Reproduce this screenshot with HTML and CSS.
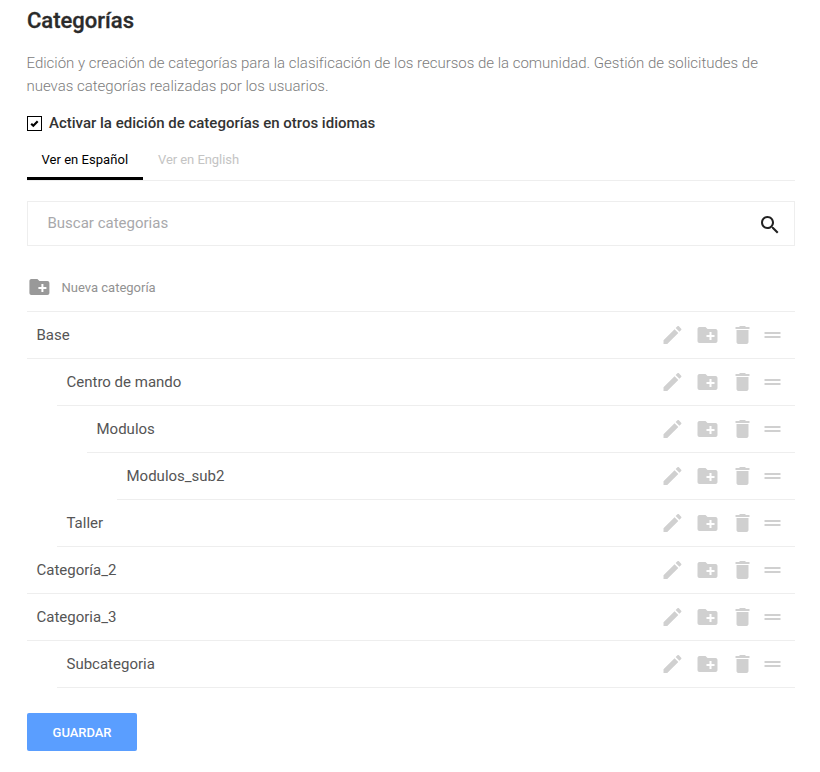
FILE: index.html
```html
<!DOCTYPE html>
<html lang="es">
<head>
<meta charset="utf-8">
<title>Categorías</title>
<link rel="stylesheet" href="styles.css">
</head>
<body>
<svg class="defs" aria-hidden="true">
<symbol id="edit" viewBox="0 0 24 24"><path d="M3 17.250V21h3.750L17.810 9.940l-3.750-3.750L3 17.250zM20.710 7.040c.39-.39.39-1.020 0-1.410l-2.340-2.340c-.39-.39-1.020-.39-1.410 0l-1.830 1.830 3.750 3.750 1.830-1.830z"/></symbol>
<symbol id="folder" viewBox="0 0 24 24"><path d="M20 6h-8l-2-2H4c-1.110 0-1.990.89-1.990 2L2 18c0 1.110.89 2 2 2h16c1.110 0 2-.89 2-2V8c0-1.110-.89-2-2-2zm-1 8h-3v3h-2v-3h-3v-2h3V9h2v3h3v2z"/></symbol>
<symbol id="delete" viewBox="0 0 24 24"><path d="M6 19c0 1.100.9 2 2 2h8c1.100 0 2-.9 2-2V7H6v12zM19 4h-3.500l-1-1h-5l-1 1H5v2h14V4z"/></symbol>
<symbol id="drag" viewBox="0 0 24 24"><path d="M20 9H4v2h16V9zM4 15h16v-2H4v2z"/></symbol>
<symbol id="search" viewBox="0 0 24 24"><path d="M15.500 14h-.79l-.28-.27C15.410 12.590 16 11.110 16 9.500 16 5.910 13.090 3 9.500 3S3 5.910 3 9.500 5.910 16 9.500 16c1.610 0 3.090-.59 4.230-1.570l.27.28v.79l5 4.990L20.490 19l-4.990-5zm-6 0C7.010 14 5 11.990 5 9.500S7.010 5 9.500 5 14 7.010 14 9.500 11.990 14 9.500 14z"/></symbol>
</svg>
<main class="page">
<h1 class="title">Categorías</h1>
<p class="intro">Edición y creación de categorías para la clasificación de los recursos de la comunidad. Gestión de solicitudes de nuevas categorías realizadas por los usuarios.</p>
<div class="check"><span class="box"><svg viewBox="0 0 13 13"><path d="M3.200 6.700 5.300 8.700l4.400-4.400"/></svg></span><span>Activar la edición de categorías en otros idiomas</span></div>
<nav class="tabs"><span class="tab active">Ver en Español</span><span class="tab">Ver en English</span></nav>
<div class="search"><span>Buscar categorias</span><svg class="icon" viewBox="0 0 24 24"><use href="#search"/></svg></div>
<div class="new"><svg class="icon" viewBox="0 0 24 24"><use href="#folder"/></svg><span>Nueva categoría</span></div>
<ul class="tree" id="tree"></ul>
<button class="save">GUARDAR</button>
</main>
<script src="app.js"></script>
</body>
</html>
```
FILE: styles.css
```css
* { box-sizing: border-box; }
body { margin: 0; background: #fff; font-family: Roboto, sans-serif; color: #333; }
.defs { display: none; }
.page { width: 768px; margin-left: 27px; padding-top: 8px; }
.title { margin: 0; font-size: 22px; line-height: 26px; font-weight: 500; color: #2b2b2b; -webkit-text-stroke: 0.3px #2b2b2b; }
.intro { margin: 18px 0 0 -0.5px; font-size: 15px; line-height: 23px; font-weight: 300; letter-spacing: -0.008px; color: #7c7c7c; }
.check { display: flex; align-items: center; gap: 7px; height: 23px; margin-top: 13px; font-size: 15px; font-weight: 500; color: #333; }
.box { width: 15px; height: 15px; border: 1px solid #000; display: flex; margin-top: 1px; }
.box svg { width: 13px; height: 13px; fill: none; stroke: #000; stroke-width: 2.2; }
.tabs { display: flex; height: 47px; border-bottom: 1px solid #eee; padding-top: 5px; font-size: 13px; }
.tab { height: 41px; line-height: 42px; padding: 0 15px; color: #c4c4c4; letter-spacing: -0.06px; white-space: nowrap; }
.tab.active { color: #000; border-bottom: 3px solid #000; width: 116px; padding: 0 0 0 14.5px; letter-spacing: 0.04px; }
.search { display: flex; align-items: center; justify-content: space-between; height: 45px; margin-top: 20px; padding: 0 12px 0 19.5px; border: 1px solid #eee; color: #a8a8ab; font-size: 15px; line-height: 20px; }
.search span { margin-top: -1px; }
.icon { width: 24px; height: 24px; fill: #d0d0d0; display: block; }
.search .icon { fill: #222; margin-top: 2px; }
.new { display: flex; align-items: center; gap: 10.5px; height: 48px; margin-top: 17px; font-size: 13px; color: #929292; }
.new .icon { fill: #999; transform: translateX(0.4px); }
.tree { list-style: none; margin: 0; padding: 0; border-top: 1px solid #eee; }
.row { display: flex; align-items: center; height: 47px; padding: 0 10px 0 9.5px; border-bottom: 1px solid #eee; font-size: 15px; color: #555; }
.level1 { margin-left: 30px; }
.level2 { margin-left: 60px; }
.level3 { margin-left: 90px; }
.name { flex: 1; }
.actions { display: flex; gap: 11px; transform: translateX(-0.5px); }
.actions .icon:last-child { margin-left: -5px; }
.save { display: block; width: 110px; height: 38px; margin-top: 25px; padding: 0; border: 0; border-radius: 2px; background: #5a9eff; color: #fff; font: 500 13px Roboto, sans-serif; letter-spacing: -0.05px; }
```
FILE: app.js
```js
const rows = [["Base",0],["Centro de mando",1],["Modulos",2],["Modulos_sub2",3],["Taller",1],["Categoría_2",0],["Categoria_3",0],["Subcategoria",1]];
const icons = ["edit","folder","delete","drag"].map(i => `<svg class="icon" viewBox="0 0 24 24"><use href="#${i}"/></svg>`).join("");
document.getElementById("tree").innerHTML = rows.map(([name, level]) => `<li class="row level${level}"><span class="name">${name}</span><span class="actions">${icons}</span></li>`).join("");
```
